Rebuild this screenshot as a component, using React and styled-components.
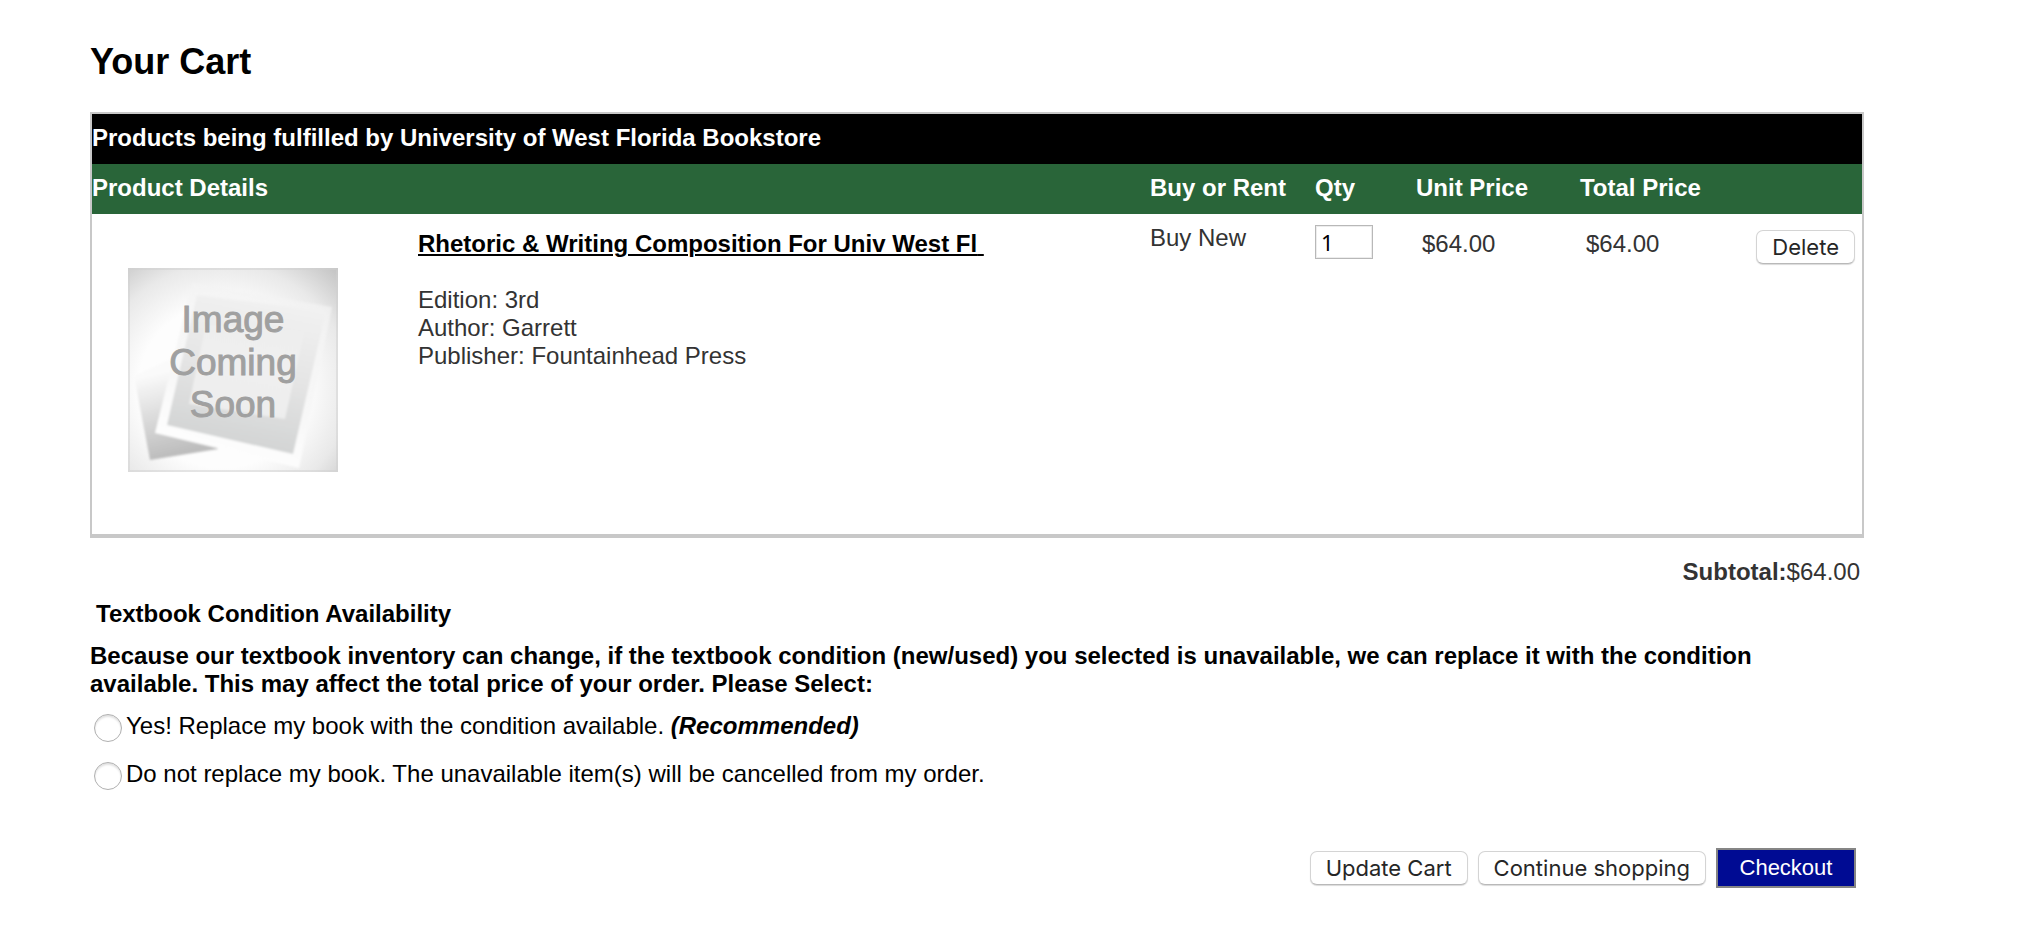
import { useState } from 'react';
import styled, { createGlobalStyle } from 'styled-components';

const BLACK = '#000';
const WHITE = '#fff';
const GREEN = '#296539';
const NAVY = '#000b93';
const GREY = '#c8c8c8';
const TEXT = '#333';

const cartItem = {
	title: 'Rhetoric & Writing Composition For Univ West Fl',
	edition: '3rd',
	author: 'Garrett',
	publisher: 'Fountainhead Press',
	option: 'Buy New',
	price: '$64.00',
};

export default function App() {
	const [qty, setQty] = useState('1');
	const [choice, setChoice] = useState('');

	return (
		<Page>
			<GlobalStyle />
			<Title>Your Cart</Title>
			<CartTable>
				<colgroup>
					<Col $width="326px" />
					<Col />
					<Col $width="165px" />
					<Col $width="101px" />
					<Col $width="164px" />
					<Col $width="164px" />
					<Col $width="118px" />
				</colgroup>
				<thead>
					<tr>
						<StoreHeading colSpan={7}>Products being fulfilled by University of West Florida Bookstore</StoreHeading>
					</tr>
					<tr>
						<ColumnHeading colSpan={2}>Product Details</ColumnHeading>
						<ColumnHeading>Buy or Rent</ColumnHeading>
						<ColumnHeading>Qty</ColumnHeading>
						<ColumnHeading>Unit Price</ColumnHeading>
						<ColumnHeading>Total Price</ColumnHeading>
						<ColumnHeading as="td" />
					</tr>
				</thead>
				<tbody>
					<ItemRow>
						<ImageCell><Placeholder /></ImageCell>
						<DetailsCell>
							<ItemLink href="#item">{cartItem.title}&nbsp;</ItemLink>
							<Details>
								<li>Edition: {cartItem.edition}</li>
								<li>Author: {cartItem.author}</li>
								<li>Publisher: {cartItem.publisher}</li>
							</Details>
						</DetailsCell>
						<OptionCell>{cartItem.option}</OptionCell>
						<QtyCell>
							<QtyInput aria-label="Qty" value={qty} onChange={(e) => setQty(e.target.value)} />
						</QtyCell>
						<PriceCell>{cartItem.price}</PriceCell>
						<PriceCell>{cartItem.price}</PriceCell>
						<DeleteCell><Button type="button">Delete</Button></DeleteCell>
					</ItemRow>
				</tbody>
			</CartTable>
			<Subtotal><b>Subtotal:</b>{cartItem.price}</Subtotal>
			<Choices>
				<Legend>Textbook Condition Availability</Legend>
				<Notice>
					Because our textbook inventory can change, if the textbook condition (new/used) you selected is unavailable, we can replace it with the condition available. This may affect the total price of your order. Please Select:
				</Notice>
				<Choice>
					<Radio name="replace" checked={choice === 'yes'} onChange={() => setChoice('yes')} />
					<span>Yes! Replace my book with the condition available. <Recommended>(Recommended)</Recommended></span>
				</Choice>
				<Choice>
					<Radio name="replace" checked={choice === 'no'} onChange={() => setChoice('no')} />
					<span>Do not replace my book. The unavailable item(s) will be cancelled from my order.</span>
				</Choice>
			</Choices>
			<Actions>
				<Button type="button">Update Cart</Button>
				<Button type="button">Continue shopping</Button>
				<CheckoutButton type="button">Checkout</CheckoutButton>
			</Actions>
		</Page>
	);
}

function Placeholder() {
	return (
		<PlaceholderSvg viewBox="0 0 210 204" role="img" aria-label="Image Coming Soon">
			<defs>
				<radialGradient id="backdrop" cx="0.45" cy="0.58" r="0.8">
					<stop offset="0.5" stopColor="#fdfdfd" />
					<stop offset="0.75" stopColor="#e9e9e9" />
					<stop offset="1" stopColor="#c2c2c2" />
				</radialGradient>
				<linearGradient id="backCard" x1="0" y1="0" x2="0.2" y2="1">
					<stop offset="0.2" stopColor="#fafafa" />
					<stop offset="1" stopColor="#bdbdbd" />
				</linearGradient>
				<linearGradient id="frontCard" x1="0.6" y1="0" x2="0.4" y2="1">
					<stop offset="0" stopColor="#f2f2f2" />
					<stop offset="0.5" stopColor="#e4e4e4" />
					<stop offset="1" stopColor="#d0d2d2" />
				</linearGradient>
				<linearGradient id="frame" x1="0.7" y1="0" x2="0.4" y2="1">
					<stop offset="0" stopColor="#f3f3f3" stopOpacity="0.7" />
					<stop offset="0.6" stopColor="#f7f7f7" />
					<stop offset="1" stopColor="#fff" />
				</linearGradient>
				<linearGradient id="shine" x1="0.6" y1="0" x2="0.4" y2="1">
					<stop offset="0" stopColor="#eee" />
					<stop offset="1" stopColor="#f4f4f4" stopOpacity="0.7" />
				</linearGradient>
				<filter id="soft"><feGaussianBlur stdDeviation="1" /></filter>
			</defs>
			<rect width="210" height="204" fill="url(#backdrop)" />
			<g filter="url(#soft)">
				<path d="M6 108 L45 90 L90 181 L22 192 Z" fill="url(#backCard)" />
				<path d="M64 15 L204 39 L171 200 L27 165 Z" fill="url(#frame)" />
				<path d="M69 27 L198 43 L165 186 L39 157 Z" fill="url(#frontCard)" />
				<path d="M78 57 L176 64 L157 151 L61 136 Z" fill="url(#shine)" />
			</g>
			<rect x="1" y="1" width="208" height="202" fill="none" stroke="#d0d0d0" strokeWidth="2" opacity="0.5" />
			<PlaceholderText x="105" y="64">Image</PlaceholderText>
			<PlaceholderText x="105" y="107">Coming</PlaceholderText>
			<PlaceholderText x="105" y="149">Soon</PlaceholderText>
		</PlaceholderSvg>
	);
}

const GlobalStyle = createGlobalStyle`
	* {
		box-sizing: border-box;
	}

	body {
		margin: 0;
		background: ${WHITE};
		color: ${BLACK};
		font: 24px/28px 'Liberation Sans', Arial, sans-serif;
	}
`;

const Page = styled.main`
	padding: 40px 158px 40px 90px;
`;

const Title = styled.h1`
	margin: 0 0 28px;
	font-size: 36px;
	line-height: 44px;
`;

const CartTable = styled.table`
	width: 100%;
	border: 2px solid ${GREY};
	border-bottom-width: 4px;
	border-spacing: 0;
	table-layout: fixed;
	color: ${TEXT};
`;

const Col = styled.col`
	width: ${({ $width }) => $width || 'auto'};
`;

const StoreHeading = styled.th`
	height: 50px;
	padding: 10px 0 12px;
	background: ${BLACK};
	color: ${WHITE};
	text-align: left;
`;

const ColumnHeading = styled(StoreHeading)`
	background: ${GREEN};
	white-space: nowrap;
`;

const ItemRow = styled.tr`
	height: 320px;
	vertical-align: top;
`;

const Cell = styled.td`
	padding: 0;
`;

const ImageCell = styled(Cell)`
	padding: 54px 0 0 36px;
`;

const DetailsCell = styled(Cell)`
	padding-top: 16px;
`;

const ItemLink = styled.a`
	color: ${BLACK};
	font-weight: bold;
	text-decoration-thickness: 2px;
	text-underline-offset: 2px;
`;

const Details = styled.ul`
	margin: 28px 0 0;
	padding: 0;
	list-style: none;
`;

const OptionCell = styled(Cell)`
	padding-top: 10px;
`;

const QtyCell = styled(Cell)`
	padding-top: 11px;
`;

const QtyInput = styled.input`
	display: block;
	width: 58px;
	height: 34px;
	padding: 0 5px;
	border: 1px solid #b8b8b8;
	box-shadow: inset 0 0 0 1px #ededed;
	color: ${BLACK};
	font: 22px 'Noto Sans', sans-serif;
`;

const PriceCell = styled(Cell)`
	padding: 16px 0 0 6px;
`;

const DeleteCell = styled(Cell)`
	padding: 16px 7px 0 0;
	text-align: right;
`;

const Button = styled.button`
	height: 34px;
	padding: 0 15px;
	border: 1px solid #d4d4d4;
	border-bottom-color: #b9b9b9;
	border-radius: 7px;
	background: ${WHITE};
	box-shadow: 0 1px 1px rgba(0, 0, 0, 0.15);
	color: #262626;
	font: 22px Inter, sans-serif;
`;

const CheckoutButton = styled.button`
	width: 140px;
	height: 40px;
	padding: 0;
	border: 2px solid #858585;
	background: ${NAVY};
	color: ${WHITE};
	font: 22px 'Liberation Sans', Arial, sans-serif;
`;

const Subtotal = styled.p`
	margin: 20px 4px 14px;
	color: ${TEXT};
	text-align: right;
`;

const Choices = styled.fieldset`
	margin: 0;
	padding: 0;
	border: 0;
`;

const Legend = styled.legend`
	padding: 0 6px;
	font-weight: bold;
`;

const Notice = styled.p`
	margin: 14px 0;
	font-weight: bold;
`;

const Choice = styled.label`
	display: flex;
	gap: 4px;
	margin: 0 0 20px 4px;
`;

const Radio = styled.input.attrs({ type: 'radio' })`
	flex: none;
	width: 28px;
	height: 28px;
	margin: 2px 0 -2px;
	border: 1px solid #b0b0b0;
	border-radius: 50%;
	background: ${WHITE};
	box-shadow: inset 0 2px 2px rgba(0, 0, 0, 0.12);
	appearance: none;

	&:checked {
		border: 9px solid ${NAVY};
	}
`;

const Recommended = styled.em`
	font-weight: bold;
`;

const Actions = styled.div`
	display: flex;
	justify-content: flex-end;
	align-items: center;
	gap: 10px;
	margin: 40px 8px 0 0;
`;

const PlaceholderSvg = styled.svg`
	display: block;
	width: 210px;
	height: 204px;
`;

const PlaceholderText = styled.text`
	fill: #a0a0a0;
	stroke: #a0a0a0;
	stroke-width: 1px;
	font: 37px 'Liberation Sans', Arial, sans-serif;
	text-anchor: middle;
`;
